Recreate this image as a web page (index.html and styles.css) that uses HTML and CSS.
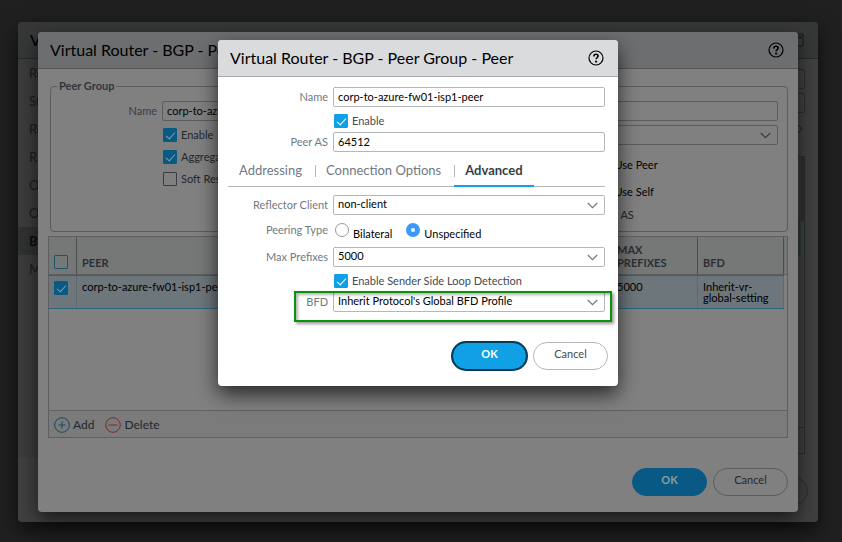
FILE: index.html
```html
<!DOCTYPE html>
<html lang="en">
<head>
<meta charset="utf-8">
<title>Virtual Router - BGP - Peer Group - Peer</title>
<link rel="stylesheet" href="styles.css">
</head>
<body>
<svg class="defs" aria-hidden="true">
  <symbol id="help" viewBox="0 0 16 16">
    <circle cx="8" cy="8" r="7" fill="none" stroke="currentColor" stroke-width="1.2"/>
    <path d="M5.9 6.4C5.9 4.9 6.8 4.2 8 4.2s2.1.8 2.1 1.9c0 1.4-2 1.5-2 3.2" fill="none" stroke="currentColor" stroke-width="1.6"/>
    <circle cx="8.1" cy="11.6" r="1.1" fill="currentColor"/>
  </symbol>
  <symbol id="chevron" viewBox="0 0 10 6"><path d="M.7.7 5 5 9.3.7" fill="none" stroke="currentColor" stroke-width="1.1"/></symbol>
</svg>

<section class="window window-router" aria-label="Virtual Router">
  <header class="titlebar"><h2>Virtual Router</h2>
    <svg class="restore" viewBox="0 0 14 14"><rect x="1" y="1" width="12" height="12" rx="1" fill="none" stroke="currentColor"/><path d="M8 3.5h3v2H8" fill="none" stroke="currentColor"/></svg>
  </header>
  <div class="router-body">
    <nav class="sidebar">
      <a href="#">Router Settings</a><a href="#">Static Routes</a><a href="#">Redistribution</a><a href="#">RIP</a><a href="#">OSPF</a><a href="#">OSPFv3</a><a href="#" class="current">BGP</a><a href="#">Multicast</a>
    </nav>
    <div class="router-main">
      <input class="field" aria-label="Router ID"><input class="field" aria-label="AS Number">
      <svg class="pager" viewBox="0 0 10 10"><path d="M5 1l4 4-4 4-4-4z" fill="none" stroke="currentColor"/></svg>
      <div class="back-grid"><div class="back-head"></div><div class="back-row"></div><div class="back-rest"></div><div class="back-foot"></div></div>
    </div>
  </div>
  <footer class="actions"><button class="btn" aria-label="Cancel"></button></footer>
</section>

<section class="window window-group" aria-label="Peer Group">
  <header class="titlebar"><h2>Virtual Router - BGP - Peer Group</h2><svg class="help"><use href="#help"/></svg></header>
  <div class="group-body">
    <fieldset>
      <legend>Peer Group</legend>
      <div class="column">
        <div class="row"><label for="gname">Name</label><input class="field" id="gname" value="corp-to-azure-fw01-isp1"></div>
        <div class="checks">
          <label class="check"><input type="checkbox" checked>Enable</label>
          <label class="check"><input type="checkbox" checked>Aggregated Confed AS Path</label>
          <label class="check"><input type="checkbox">Soft Reset With Stored Info</label>
        </div>
      </div>
      <div class="column">
        <input class="field" aria-label="Type">
        <div class="picker"><select class="field" aria-label="Session"><option></option></select><svg><use href="#chevron"/></svg></div>
        <ul class="hops"><li>Use Peer</li><li>Use Self</li><li class="muted">Remove Private AS</li></ul>
      </div>
    </fieldset>
    <div class="grid">
      <div class="grid-scroll">
        <table>
          <thead><tr><th class="tick"><input type="checkbox" aria-label="Select all"></th><th>PEER</th><th class="narrow">MAX PREFIXES</th><th class="narrow">BFD</th></tr></thead>
          <tbody><tr><td class="tick"><input type="checkbox" checked aria-label="Select peer"></td><td>corp-to-azure-fw01-isp1-peer</td><td>5000</td><td>Inherit-vr-global-setting</td></tr></tbody>
        </table>
      </div>
      <div class="toolbar">
        <button><svg class="add" viewBox="0 0 16 16"><circle cx="8" cy="8" r="7.3"/><path d="M8 4.5v7M4.5 8h7"/></svg>Add</button>
        <button><svg class="del" viewBox="0 0 16 16"><circle cx="8" cy="8" r="7.3"/><path d="M3.5 8h9"/></svg>Delete</button>
      </div>
    </div>
  </div>
  <footer class="actions"><button class="btn primary">OK</button><button class="btn">Cancel</button></footer>
</section>

<main class="window window-peer">
  <header class="titlebar"><h1>Virtual Router - BGP - Peer Group - Peer</h1><svg class="help"><use href="#help"/></svg></header>
  <form class="peer-form">
    <div class="row"><label for="name">Name</label><input class="field" id="name" value="corp-to-azure-fw01-isp1-peer"></div>
    <div class="row check-row"><label class="check"><input type="checkbox" checked>Enable</label></div>
    <div class="row"><label for="as">Peer AS</label><input class="field" id="as" value="64512"></div>
    <nav class="tabs"><a href="#">Addressing</a><a href="#">Connection Options</a><a href="#" class="active">Advanced</a></nav>
    <div class="row"><label for="reflector">Reflector Client</label><div class="picker"><select class="field" id="reflector"><option>non-client</option></select><svg><use href="#chevron"/></svg></div></div>
    <div class="row radio-row"><span class="caption">Peering Type</span><div class="radios">
      <label><input type="radio" name="peering"><span>Bilateral</span></label>
      <label><input type="radio" name="peering" checked><span>Unspecified</span></label></div></div>
    <div class="row"><label for="max">Max Prefixes</label><div class="picker"><select class="field" id="max"><option>5000</option></select><svg><use href="#chevron"/></svg></div></div>
    <div class="row check-row"><label class="check"><input type="checkbox" checked>Enable Sender Side Loop Detection</label></div>
    <div class="row marked"><label for="bfd">BFD</label><div class="picker"><select class="field" id="bfd"><option>Inherit Protocol's Global BFD Profile</option></select><svg><use href="#chevron"/></svg></div></div>
  </form>
  <footer class="actions"><button class="btn primary focused">OK</button><button class="btn">Cancel</button></footer>
</main>
</body>
</html>
```
FILE: styles.css
```css
* { box-sizing: border-box; }

:root {
  --ink: #000;
  --soft: #434a52;
  --label: #707a84;
  --line: #b4b7ba;
  --surface: #fff;
  --bar: #dadbdd;
  --bar-line: #a4a8ac;
  --accent: #0fa0e6;
  --tick: #fff;
}

body {
  margin: 0;
  min-height: 100vh;
  overflow: hidden;
  background: #202020;
  font: 11px/14px Lato, "Liberation Sans", sans-serif;
  color: var(--ink);
}

.defs { position: absolute; width: 0; height: 0; }
h1, h2 { margin: 0; font-size: 16px; font-weight: 400; line-height: 20px; white-space: nowrap; }
a { color: inherit; text-decoration: none; }
button, input, select { font: inherit; color: inherit; }

/* Stacked windows */
.window {
  position: absolute;
  display: flex;
  flex-direction: column;
  background: var(--surface);
  border-radius: 4px;
  overflow: hidden;
}
.window-router {
  inset: 22px 24px 20px 18px;
  --surface: #404040; --bar: #363737; --bar-line: #292a2a; --line: #2c2d2d;
  --label: #1d1f20; --soft: #1c1e20;
  box-shadow: 0 8px 20px rgba(0, 0, 0, .6);
}
.window-group {
  inset: 32px 44px 30px 38px;
  --surface: #808080; --bar: #6d6e70; --bar-line: #525456; --line: #5b5c5e;
  --label: #393d42; --soft: #23272b; --accent: #085a84; --tick: #8d9ba3;
  box-shadow: 0 8px 20px rgba(0, 0, 0, .6);
}
.window-peer {
  top: 40px;
  left: calc(50% - 203px);
  width: 400px;
  box-shadow: 0 8px 20px rgba(0, 0, 0, .7);
}

.titlebar {
  display: flex;
  flex: none;
  align-items: center;
  justify-content: space-between;
  height: 37px;
  padding: 0 14px 1px 12px;
  background: var(--bar);
  border-bottom: 1px solid var(--bar-line);
}
.help { width: 16px; height: 16px; }
.restore { width: 14px; height: 14px; color: #151616; }

/* Fields */
.row { display: grid; grid-template-columns: 100px 1fr; column-gap: 5px; }
.row > label, .caption { color: var(--label); text-align: right; line-height: 20px; white-space: nowrap; }
.field {
  display: block;
  width: 100%;
  height: 20px;
  margin: 0;
  padding: 0 4px 2px;
  border: 1px solid var(--line);
  border-radius: 2px;
  background: transparent;
  appearance: none;
  outline: 0;
}
.picker { position: relative; }
.picker svg { position: absolute; right: 7px; top: 7px; width: 11px; height: 7px; color: var(--label); pointer-events: none; }

input[type="checkbox"] {
  flex: none;
  width: 14px;
  height: 14px;
  margin: 0;
  border: 1px solid var(--label);
  border-radius: 1px;
  appearance: none;
  display: grid;
  place-items: center;
}
input[type="checkbox"]:checked { background: var(--accent); border-color: var(--accent); }
input[type="checkbox"]:checked::before {
  content: "";
  width: 4px;
  height: 8px;
  margin-bottom: 2px;
  border: solid var(--tick);
  border-width: 0 1px 1px 0;
  transform: rotate(42deg);
}
.row > .check, .check { display: flex; gap: 4px; color: var(--soft); line-height: 14px; white-space: nowrap; }

/* Buttons */
.actions { display: flex; justify-content: flex-end; gap: 6px; margin-top: auto; padding: 0 10px 16px; }
.btn {
  width: 75px;
  height: 28px;
  padding: 0 0 4px;
  border: 1px solid var(--line);
  border-radius: 14px;
  background: transparent;
  color: var(--soft);
}
.primary { background: var(--accent); border-color: var(--accent); color: var(--tick); font-weight: 700; }
.focused { border-color: #06384f; box-shadow: 0 0 0 1px #06384f; }

/* Router window */
.router-body { display: flex; flex: 1; }
.sidebar { width: 110px; height: 399px; background: #3c3c3c; color: #1a1b1c; }
.sidebar a { display: block; padding: 0 11px; font-size: 13px; line-height: 28px; white-space: nowrap; }
.sidebar .current { background: #303231; color: #0d0e0f; font-weight: 700; }
.router-main { display: flex; flex: 1; flex-direction: column; gap: 4px; padding: 10px 13px 0 10px; }
.pager { align-self: flex-end; width: 10px; height: 10px; margin: 7px 2px 9px 0; color: #1c1e1f; }
.back-grid { margin-top: 9px; border: 1px solid #2b2d2e; }
.back-head { height: 64px; background: #383a3a; border-right: 3px solid #2d3030; }
.back-row { height: 34px; margin-right: 3px; background: #303a3d; border: solid #173747; border-width: 1px 0; }
.back-rest { height: 172px; }
.back-foot { height: 26px; border-top: 1px solid #2b2d2e; }
.window-router .btn { margin-bottom: 1px; }

/* Peer group window */
.group-body { padding: 10px 10px 0; }
fieldset {
  display: grid;
  grid-template-columns: 1fr 1fr;
  gap: 10px;
  height: 153px;
  margin: 0 0 4px 2px;
  padding: 8px 9px 0 6px;
  border: 1px solid var(--line);
  border-radius: 4px;
}
legend { padding: 0 2px; color: #30363c; font-weight: 700; }
.checks { display: grid; gap: 8px; padding: 7px 0 0 106px; }
.column .picker { margin-top: 4px; }
.hops { margin: 0; padding: 12px 0 0 192px; list-style: none; line-height: 15px; }
.hops li { margin-bottom: 12px; }
.hops .muted { margin-top: -4px; color: var(--soft); text-indent: -72px; white-space: nowrap; }

.grid { border: 1px solid #5d5f60; }
.grid-scroll { height: 173px; padding-right: 3px; background: linear-gradient(#747675 37px, #5d5f60 37px 38px, transparent 38px); }
table { width: 100%; border-collapse: separate; border-spacing: 0; table-layout: fixed; }
th, td { text-align: left; }
th { height: 38px; padding: 0 5px 5px; border-right: 1px solid #4b4d4e; border-bottom: 1px solid #5d5f60; background: #757876; color: #2b2f33; font-weight: 700; line-height: 13px; vertical-align: bottom; }
td { height: 34px; padding: 5px 5px 4px; border: solid #2c657f; border-width: 1px 0; background: #6c767b; line-height: 11px; vertical-align: top; box-shadow: inset -1px 0 #62696d; }
th.tick { width: 28px; padding-bottom: 5px; }
.tick input { --label: #1d546f; }
.narrow { width: 86px; }
.toolbar { display: flex; align-items: center; gap: 11px; height: 27px; padding: 1px 5px 0; border-top: 1px solid #606264; background: #7b7b7b; }
.toolbar button { display: flex; align-items: center; gap: 3px; padding: 0; border: 0; background: none; color: var(--soft); font-size: 12px; }
.toolbar svg { width: 16px; height: 16px; fill: none; }
.add { stroke: #164a64; }
.del { stroke: #7b2a28; }

/* Peer window */
.peer-form { padding: 10px 13px 0 10px; }
.check-row { padding: 7px 0 4px; }
.check-row .check { grid-column: 2; padding-left: 1px; }
.tabs {
  display: flex;
  height: 35px;
  margin-bottom: 8px;
  border-bottom: 1px solid var(--line);
  color: var(--label);
  font-size: 13px;
  line-height: 36px;
}
.tabs a { position: relative; padding: 0 13px 0 11px; white-space: nowrap; }
.tabs a + a::before { content: ""; position: absolute; left: 0; top: 13px; height: 12px; border-left: 1px solid var(--line); }
.tabs .active { height: 35px; padding-right: 11px; border-bottom: 2px solid var(--accent); color: #363e46; font-weight: 700; }
.radio-row { height: 32px; padding-top: 5px; }
.radios { display: flex; gap: 14px; padding: 3px 0 0 2px; }
.radios label { display: flex; gap: 4px; }
.radios span { padding-top: 4px; }
input[type="radio"] { width: 14px; height: 14px; margin: 0; border: 1px solid #999; border-radius: 50%; appearance: none; background: #fff; }
input[type="radio"]:checked { border: 5px solid #3b99fc; }
.marked { position: relative; }
.marked::after {
  content: "";
  position: absolute;
  inset: -1px -7px -10px 66px;
  border: 2px solid #0a930a;
  box-shadow: 2px 2px 3px rgba(0, 0, 0, .4), inset 2px 2px 3px rgba(0, 0, 0, .3);
  pointer-events: none;
}
.window-peer .actions { margin-top: 30px; }
```
